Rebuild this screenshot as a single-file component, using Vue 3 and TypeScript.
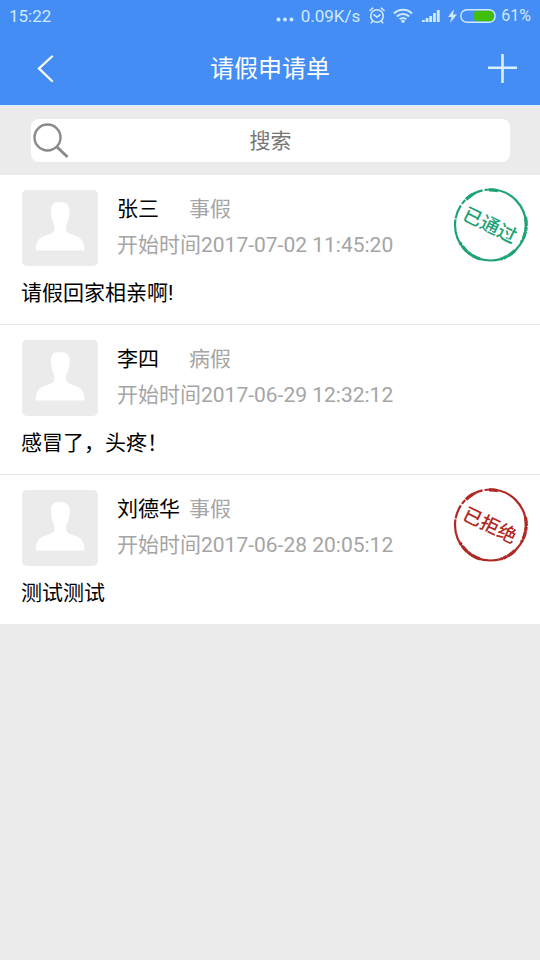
<script setup lang="ts">
import { ref } from 'vue'

interface LeaveRequest {
  id: number
  name: string
  type: string
  start: string
  reason: string
  stamp?: { text: string; tone: 'approved' | 'rejected' }
}

const keyword = ref('')

const requests: LeaveRequest[] = [
  {
    id: 1,
    name: '张三',
    type: '事假',
    start: '2017-07-02 11:45:20',
    reason: '请假回家相亲啊!',
    stamp: { text: '已通过', tone: 'approved' },
  },
  { id: 2, name: '李四', type: '病假', start: '2017-06-29 12:32:12', reason: '感冒了，头疼！' },
  {
    id: 3,
    name: '刘德华',
    type: '事假',
    start: '2017-06-28 20:05:12',
    reason: '测试测试',
    stamp: { text: '已拒绝', tone: 'rejected' },
  },
]
</script>

<template>
  <div class="page">
    <div class="top">
      <div class="status">
        <span class="clock">15:22</span>
        <svg class="dots" width="18" height="16" viewBox="0 0 18 16" fill="currentColor">
          <circle cx="2.5" cy="11.5" r="2" />
          <circle cx="9" cy="11.5" r="2" />
          <circle cx="15.5" cy="11.5" r="2" />
        </svg>
        <span class="speed">0.09K/s</span>
        <svg class="alarm" width="16" height="18" viewBox="0 0 16 18" fill="none" stroke="currentColor" stroke-width="1.6" stroke-linecap="round">
          <circle cx="8" cy="9" r="6.3" />
          <path d="M5 7.800 8 10.200l3-2.400M1 3.500l2.600-2.300M15 3.500l-2.600-2.300M3.500 14.500l-1.300 1.300M12.500 14.500l1.300 1.300" />
        </svg>
        <svg class="wifi" width="20" height="16" viewBox="0 0 20 16" fill="none" stroke="currentColor" stroke-width="2.1">
          <path d="M1 5.500a12.800 12.800 0 0 1 18 0M3.900 8.500a8.700 8.700 0 0 1 12.200 0M6.700 11.300a4.800 4.800 0 0 1 6.600 0" />
          <circle cx="10" cy="13.200" r="1.700" fill="currentColor" stroke="none" />
        </svg>
        <svg class="signal" width="20" height="14" viewBox="0 0 20 14" fill="currentColor">
          <path d="M1 11h2.800v2H1zM4.600 9h2.800v4H4.600zM8.300 7h2.800v6H8.300zM12 4h2.800v9H12zM15.800 1h2.900v12h-2.900z" />
        </svg>
        <svg class="bolt" width="9" height="14" viewBox="0 0 9 14" fill="currentColor">
          <path d="M6 0 0 8h3.500L2 14l7-8.500H5z" />
        </svg>
        <svg class="battery" width="36" height="14" viewBox="0 0 36 14">
          <rect x="14" y="1.500" width="20" height="11" rx="4" fill="#40bf0a" />
          <rect x=".8" y=".8" width="34.400" height="12.400" rx="6.200" fill="none" stroke="currentColor" stroke-width="1.4" />
        </svg>
        <span class="percent">61%</span>
      </div>
      <header class="bar">
        <button class="icon-button" type="button" aria-label="返回">
          <svg width="18" height="28" viewBox="0 0 18 28" fill="none" stroke="#fff" stroke-width="2.3" stroke-linecap="round">
            <path d="M16 1.500 3 13.500l13 12.500" />
          </svg>
        </button>
        <h1>请假申请单</h1>
        <button class="icon-button add" type="button" aria-label="新增">
          <svg width="30" height="30" viewBox="0 0 30 30" fill="none" stroke="#dcefff" stroke-width="2.6">
            <path d="M14.500 0v29M0 13.800h29" />
          </svg>
        </button>
      </header>
    </div>

    <form class="search" @submit.prevent>
      <label class="search-box">
        <svg class="search-icon" width="38" height="38" viewBox="0 0 38 38" fill="none" stroke="#8a8a8a">
          <circle cx="14.500" cy="15.500" r="13" stroke-width="2.4" />
          <path d="m24 25 10.500 10" stroke-width="3" />
        </svg>
        <input v-model="keyword" type="text" placeholder="搜索" aria-label="搜索" />
      </label>
    </form>

    <ul class="list">
      <li v-for="item in requests" :key="item.id" class="item">
        <div class="head">
          <svg class="avatar" width="76" height="76" viewBox="0 0 76 76">
            <rect width="76" height="76" rx="5" fill="#ebebeb" />
            <path
              fill="#fff"
              d="M29 20c0-5 2.500-7.500 6.500-8.300l2.500.7c5.500-.4 9.300 2 9.600 7.600.1 3-.2 5-.6 7.500-.5 3-1.400 4.500-2.500 6.500-1 2.500-.8 5.500 0 7.200 1.500 2.500 5.500 3.300 9.500 4.800 5.500 2 8.600 6.500 8.600 14.600H13.600c0-8.100 3.100-12.600 8.600-14.600 4-1.500 8-2.300 9.600-4.800.9-1.700 1-4.700.1-7.200-1.200-2-1.900-3.500-2.300-6.500-.4-2.500-.6-4.500-.6-7.500z"
            />
          </svg>
          <div class="info">
            <div class="line">
              <span class="name">{{ item.name }}</span>
              <span class="muted">{{ item.type }}</span>
            </div>
            <div class="line muted">开始时间{{ item.start }}</div>
          </div>
          <svg v-if="item.stamp" class="stamp" :class="item.stamp.tone" width="76" height="76" viewBox="0 0 76 76">
            <g fill="none" stroke="currentColor">
              <circle cx="38.500" cy="38" r="35.500" stroke-width="2.2" stroke-dasharray="117 1 14 2 5 2 18 2 62 0" />
              <path
                d="M73.500 30a35.500 35.500 0 0 1-4 25M63 63.500a35.500 35.500 0 0 1-14 8.500M28 72a35.500 35.500 0 0 1-20-16.500M14 12.500a35.500 35.500 0 0 1 9-6.500M37 2.800a35.500 35.500 0 0 1 9 1"
                stroke-width="3.2"
                stroke-dasharray="9 1 4 1 7 2"
              />
            </g>
            <text x="38" y="45" text-anchor="middle" transform="rotate(26 38 38)">{{ item.stamp.text }}</text>
            <path d="m20 36 4 1M33 46l3-2M46 31l3 1M55 51l3 2M60 44l2-2" stroke="#fff" stroke-width=".8" />
          </svg>
        </div>
        <p class="reason">{{ item.reason }}</p>
      </li>
    </ul>
  </div>
</template>

<style>
body {
  margin: 0;
  background: #ebebeb;
}
</style>

<style scoped>
.page {
  min-height: 100vh;
  background: #ebebeb;
  color: #000;
  font-family: Roboto, 'Noto Sans CJK SC', sans-serif;
  font-size: 21px;
}

.top {
  background: #448df5;
}

.status {
  display: flex;
  align-items: center;
  height: 32px;
  padding: 0 9px;
  color: #cfe9ff;
  font-size: 17px;
  line-height: 32px;
}

.clock {
  margin-right: auto;
}

.speed {
  margin: 0 9px 0 7px;
}

.alarm {
  margin-right: 8px;
}

.wifi {
  margin-right: 8px;
}

.signal {
  margin-right: 7px;
}

.bolt {
  margin-right: 3px;
}

.percent {
  margin-left: 5px;
  font-size: 16px;
}

.bar {
  display: grid;
  grid-template-columns: 64px 1fr 64px;
  align-items: center;
  height: 73px;
  padding: 0 14px;
}

.bar h1 {
  margin: 0;
  color: #fff;
  font-size: 24px;
  font-weight: 400;
  line-height: 36px;
  text-align: center;
}

.icon-button {
  display: flex;
  align-items: center;
  height: 48px;
  padding: 0 22px;
  border: 0;
  background: none;
  cursor: pointer;
}

.icon-button.add {
  justify-content: flex-end;
  padding: 0 8px;
}

.search {
  padding: 13px 30px 13px 31px;
  border-top: 1px solid #d3effc;
}

.search-box {
  display: grid;
  align-items: center;
  height: 43px;
  border-radius: 8px;
  background: #fff;
}

.search-box > * {
  grid-area: 1 / 1;
}

.search-icon {
  margin-left: 2px;
  pointer-events: none;
}

.search-box input {
  width: 100%;
  height: 43px;
  padding: 0;
  border: 0;
  outline: 0;
  background: transparent;
  color: #333;
  font: inherit;
  text-align: center;
}

.search-box input::placeholder {
  color: #777;
  opacity: 1;
}

.list {
  margin: 0;
  padding: 0;
  list-style: none;
}

.item {
  padding: 15px 12px 16px 22px;
  border-bottom: 1px solid #e8e8e8;
  background: #fff;
}

.item:last-child {
  border-bottom-color: #ebebeb;
}

.head {
  display: flex;
  align-items: flex-start;
}

.avatar {
  flex: none;
}

.info {
  flex: 1;
  margin-left: 19px;
  padding-top: 1px;
}

.line {
  display: flex;
  line-height: 36px;
}

.name {
  min-width: 72px;
}

.muted {
  color: #a5a5a5;
}

.stamp {
  flex: none;
  margin-top: -3px;
}

.stamp text {
  fill: currentColor;
  font-size: 19px;
  font-weight: 500;
}

.approved {
  color: #1fa277;
}

.rejected {
  color: #b02a25;
}

.reason {
  margin: 12px 0 0 -1px;
  line-height: 30px;
}
</style>
